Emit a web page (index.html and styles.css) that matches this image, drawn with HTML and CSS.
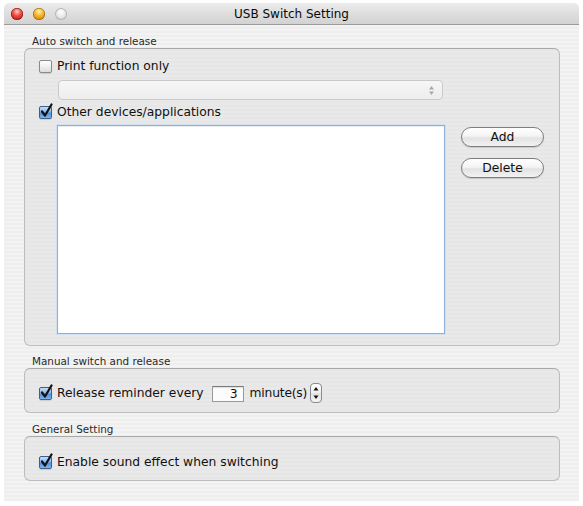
FILE: index.html
```
<!DOCTYPE html>
<html>
<head>
<meta charset="utf-8">
<link rel="stylesheet" href="styles.css">
</head>
<body>
<div class="window">
  <div class="titlebar">
    <div class="lights">
      <span class="light red"></span>
      <span class="light yellow"></span>
      <span class="light gray"></span>
    </div>
    <div class="title">USB Switch Setting</div>
    <div></div>
  </div>
  <div class="content">
    <div class="section-label">Auto switch and release</div>
    <div class="group group-auto">
      <div class="row">
        <span class="checkbox"></span>
        <span class="label">Print function only</span>
      </div>
      <div class="popup">
        <svg class="popup-arrows" width="7" height="11" viewBox="0 0 7 11"><path d="M3.5 1 L6 4.5 H1 Z" fill="#a8a8a8"/><path d="M3.5 10 L6 6.5 H1 Z" fill="#a8a8a8"/></svg>
      </div>
      <div class="row row-other">
        <span class="checkbox checked"><svg width="15" height="16" viewBox="0 0 15 16"><path d="M3 8.5 L6 12.5 L12.5 1.5" fill="none" stroke="#111" stroke-width="2.2" stroke-linecap="round" stroke-linejoin="round"/></svg></span>
        <span class="label">Other devices/applications</span>
      </div>
      <div class="list-row">
        <div class="list"></div>
        <div class="buttons">
          <div class="button">Add</div>
          <div class="button">Delete</div>
        </div>
      </div>
    </div>

    <div class="section-label">Manual switch and release</div>
    <div class="group group-manual">
      <div class="row">
        <span class="checkbox checked"><svg width="15" height="16" viewBox="0 0 15 16"><path d="M3 8.5 L6 12.5 L12.5 1.5" fill="none" stroke="#111" stroke-width="2.2" stroke-linecap="round" stroke-linejoin="round"/></svg></span>
        <span class="label">Release reminder every</span>
        <span class="number">3</span>
        <span class="label unit">minute(s)</span>
        <span class="stepper">
          <svg width="12" height="20" viewBox="0 0 12 20"><path d="M6 4 L8.5 7.5 H3.5 Z" fill="#111"/><path d="M6 16 L8.5 12.5 H3.5 Z" fill="#111"/></svg>
        </span>
      </div>
    </div>

    <div class="section-label">General Setting</div>
    <div class="group group-general">
      <div class="row">
        <span class="checkbox checked"><svg width="15" height="16" viewBox="0 0 15 16"><path d="M3 8.5 L6 12.5 L12.5 1.5" fill="none" stroke="#111" stroke-width="2.2" stroke-linecap="round" stroke-linejoin="round"/></svg></span>
        <span class="label">Enable sound effect when switching</span>
      </div>
    </div>
  </div>
</div>
</body>
</html>
```
FILE: styles.css
```
* { box-sizing: border-box; }
html, body { margin: 0; padding: 0; background: #ffffff; }
body { font-family: "DejaVu Sans", "Verdana", sans-serif; color: #111; }

.window {
  margin: 3px 0 0 4px;
  width: 575px;
  height: 498px;
  border-radius: 5px 5px 0 0;
  background: repeating-linear-gradient(to bottom, #eeeeee 0px, #eeeeee 2px, #f3f3f3 2px, #f3f3f3 4px);
  overflow: hidden;
}

.titlebar {
  height: 22px;
  display: grid;
  grid-template-columns: 1fr auto 1fr;
  align-items: center;
  background: linear-gradient(to bottom, #ececec 0%, #dedede 50%, #d2d2d2 100%);
  border-bottom: 1px solid #9a9a9a;
  border-radius: 5px 5px 0 0;
}
.lights { display: flex; gap: 10px; padding-left: 7px; align-items: center; }
.light { width: 12px; height: 12px; border-radius: 50%; display: block; }
.light.red {
  background: radial-gradient(circle at 50% 30%, #ffd0cc 0%, #f25b50 35%, #c81e14 75%, #8c1008 100%);
  box-shadow: inset 0 0 0 0.5px #7a0f08;
}
.light.yellow {
  background: radial-gradient(circle at 50% 30%, #fff2c0 0%, #f8c03c 35%, #d88a08 75%, #9a5e04 100%);
  box-shadow: inset 0 0 0 0.5px #8a5a08;
}
.light.gray {
  background: radial-gradient(circle at 50% 35%, #ffffff 0%, #e6e6e6 50%, #c8c8c8 100%);
  box-shadow: inset 0 0 0 1px #b4b4b4;
}
.title { font-size: 12px; color: #0a0a0a; }

.content { padding: 0 19px 0 20px; }

.section-label {
  font-size: 10.4px;
  line-height: 14px;
  color: #2a2a2a;
  padding-left: 8px;
  margin-top: 9px;
}

.group {
  border: 1px solid #bdbdbd;
  border-top-color: #a9a9a9;
  border-radius: 6px;
  background: repeating-linear-gradient(to bottom, #e6e6e6 0px, #e6e6e6 2px, #e9e9e9 2px, #e9e9e9 4px);
  padding-left: 14px;
}
.group-auto { height: 298px; padding-top: 8px; }
.group-manual { height: 45px; padding-top: 14px; }
.group-general { height: 45px; padding-top: 16px; }

.group-auto + .section-label { margin-top: 8px; }
.group-manual + .section-label { margin-top: 9px; }

.row { display: flex; align-items: center; height: 18px; }
.group-manual .row { height: 20px; }

.checkbox {
  width: 13px; height: 13px;
  border-radius: 2px;
  border: 1px solid #8a8a8a;
  background: linear-gradient(to bottom, #ffffff 0%, #f0f0f0 50%, #dcdcdc 100%);
  position: relative;
  flex: none;
  box-shadow: 0 1px 1px rgba(0,0,0,0.12);
}
.checkbox.checked {
  border-color: #3e5f8a;
  background: linear-gradient(to bottom, #c7def7 0%, #86b6ea 45%, #4f8fdc 55%, #7fb5f0 100%);
}
.checkbox svg { position: absolute; left: -1px; top: -4px; }

.label { font-size: 12.3px; margin-left: 5px; white-space: nowrap; color: #111; }

.popup {
  margin: 5px 0 0 19px;
  width: 385px;
  height: 20px;
  border: 1px solid #c9c9c9;
  border-radius: 4px;
  background: linear-gradient(to bottom, #f6f6f6 0%, #ededed 100%);
  display: flex;
  justify-content: flex-end;
  align-items: center;
  padding-right: 7px;
}
.popup-arrows { display: block; }

.row-other { margin-top: 3px; }

.list-row { display: flex; gap: 16px; margin-top: 4px; margin-left: 18px; }
.list {
  width: 388px;
  height: 209px;
  background: #ffffff;
  border: 1px solid #8fb0d8;
  box-shadow: 0 0 0 1px #cfe0f2, inset 0 1px 1px rgba(0,0,0,0.08);
}
.buttons { display: flex; flex-direction: column; gap: 11px; margin-top: 2px; }
.button {
  width: 83px; height: 20px;
  border: 1px solid #7e7e7e;
  border-radius: 10px;
  background: linear-gradient(to bottom, #ffffff 0%, #f4f4f4 45%, #e2e2e2 55%, #f2f2f2 100%);
  font-size: 12.3px;
  line-height: 18px;
  text-align: center;
  color: #111;
  box-shadow: 0 1px 1px rgba(0,0,0,0.15);
}

.number {
  margin-left: 8px;
  width: 32px; height: 16px;
  border: 1px solid #9a9a9a;
  border-top-color: #7c7c7c;
  background: #fcfcfc;
  font-size: 12.3px;
  line-height: 14px;
  text-align: right;
  padding-right: 5px;
  box-shadow: inset 0 1px 1px rgba(0,0,0,0.12);
  position: relative;
  top: 1px;
}
.unit { margin-left: 6px; letter-spacing: -0.2px; }
.stepper {
  margin-left: 3px;
  width: 12px; height: 20px;
  border: 1px solid #8a8a8a;
  border-radius: 4px;
  background: linear-gradient(to bottom, #ffffff 0%, #eeeeee 50%, #e2e2e2 51%, #f5f5f5 100%);
  position: relative;
}
.stepper svg { position: absolute; left: -1px; top: -1px; }
```
